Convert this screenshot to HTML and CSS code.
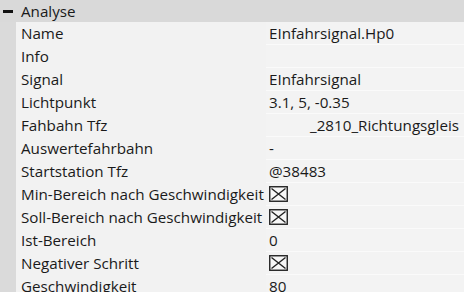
FILE: index.html
```html
<!DOCTYPE html>
<html lang="de">
<head>
    <meta charset="UTF-8">
    <title>Analyse</title>
    <link rel="stylesheet" href="styles.css">
</head>
<body>
    <div class="grid">
        <div class="group">
            <span class="toggle"></span>
            <span class="group-title">Analyse</span>
        </div>

        <div class="row"><div class="gutter"></div><div class="label">Name</div><div class="value">EInfahrsignal.Hp0</div></div>
        <div class="row"><div class="gutter"></div><div class="label">Info</div><div class="value"></div></div>
        <div class="row"><div class="gutter"></div><div class="label">Signal</div><div class="value">EInfahrsignal</div></div>
        <div class="row"><div class="gutter"></div><div class="label">Lichtpunkt</div><div class="value">3.1, 5, -0.35</div></div>
        <div class="row"><div class="gutter"></div><div class="label">Fahbahn Tfz</div><div class="value"><span class="hidden-part"></span>_2810_Richtungsgleis</div></div>
        <div class="row"><div class="gutter"></div><div class="label">Auswertefahrbahn</div><div class="value">-</div></div>
        <div class="row"><div class="gutter"></div><div class="label">Startstation Tfz</div><div class="value">@38483</div></div>
        <div class="row"><div class="gutter"></div><div class="label">Min-Bereich nach Geschwindigkeit</div><div class="value"><svg class="check" viewBox="0 0 19 16"><rect x="0.75" y="0.75" width="17.5" height="14.5"/><path d="M2.5 2.5 L16.5 13.5 M16.5 2.5 L2.5 13.5"/></svg></div></div>
        <div class="row"><div class="gutter"></div><div class="label">Soll-Bereich nach Geschwindigkeit</div><div class="value"><svg class="check" viewBox="0 0 19 16"><rect x="0.75" y="0.75" width="17.5" height="14.5"/><path d="M2.5 2.5 L16.5 13.5 M16.5 2.5 L2.5 13.5"/></svg></div></div>
        <div class="row"><div class="gutter"></div><div class="label">Ist-Bereich</div><div class="value">0</div></div>
        <div class="row"><div class="gutter"></div><div class="label">Negativer Schritt</div><div class="value"><svg class="check" viewBox="0 0 19 16"><rect x="0.75" y="0.75" width="17.5" height="14.5"/><path d="M2.5 2.5 L16.5 13.5 M16.5 2.5 L2.5 13.5"/></svg></div></div>
        <div class="row"><div class="gutter"></div><div class="label">Geschwindigkeit</div><div class="value">80</div></div>
    </div>
</body>
</html>
```

FILE: styles.css
```css
* {
    margin: 0;
    padding: 0;
    box-sizing: border-box;
}

body {
    background: #f2f2f2;
    font-family: "Open Sans", "Noto Sans", sans-serif;
    font-size: 15.2px;
    color: #1a1a1a;
    overflow: hidden;
}

.group {
    display: flex;
    align-items: center;
    height: 22px;
    background: #d9d9d9;
}

.toggle {
    width: 16px;
    display: flex;
    justify-content: center;
}

.toggle::before {
    content: "";
    display: block;
    width: 10px;
    height: 3px;
    background: #111;
}

.group-title {
    padding-left: 5px;
}

.row {
    display: grid;
    grid-template-columns: 16px 250px 1fr;
    height: 23px;
}

.gutter {
    background: #dadada;
}

.label {
    padding-left: 5px;
    line-height: 22px;
    white-space: nowrap;
    overflow: hidden;
}

.value {
    display: flex;
    align-items: center;
    padding-left: 3px;
    background: #f3f3f3;
    border-bottom: 1px solid #fafafa;
    white-space: nowrap;
}

.hidden-part {
    display: inline-block;
    width: 41px;
}

.check {
    display: block;
    width: 19px;
    height: 16px;
    fill: #f7f7f7;
    stroke: #222;
    stroke-width: 1.4;
}
```
